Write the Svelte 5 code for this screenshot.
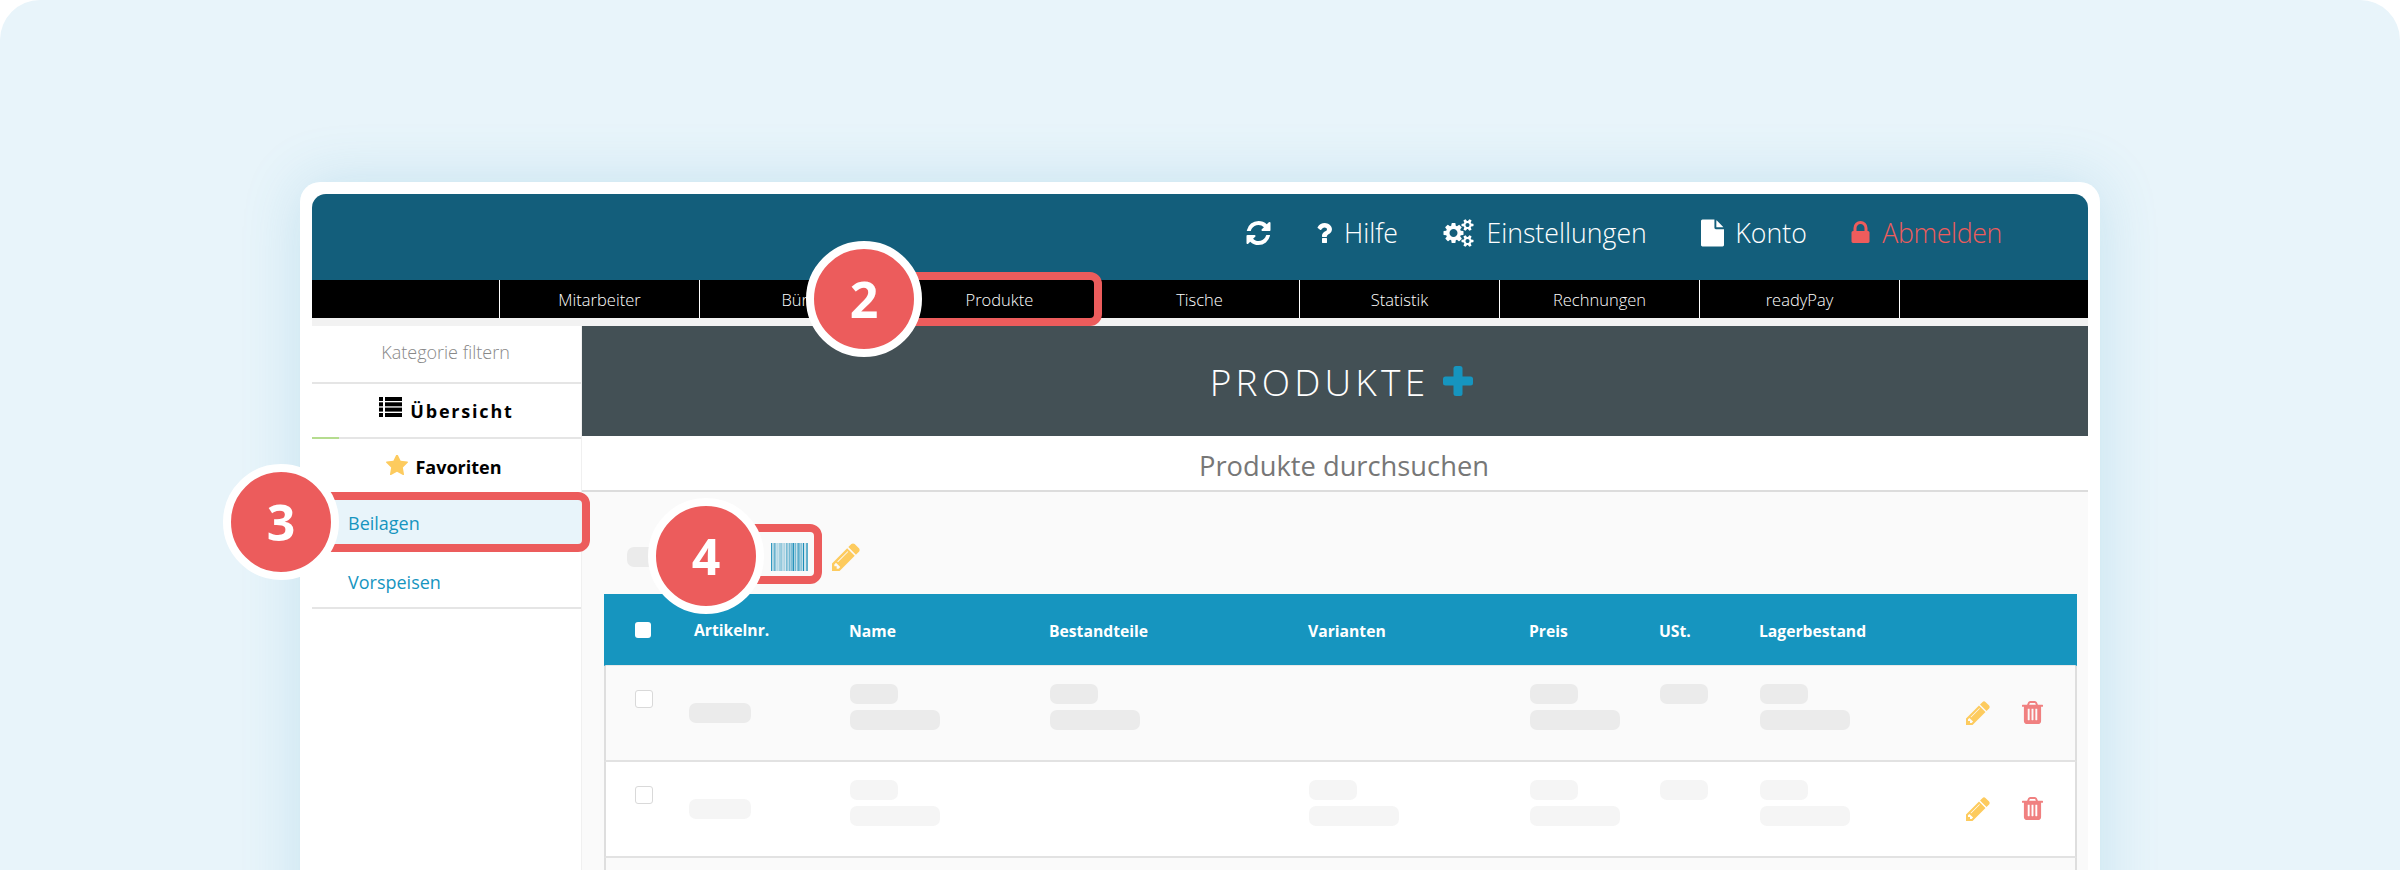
<script>
  const navItems = ['Mitarbeiter', 'Büro', 'Produkte', 'Tische', 'Statistik', 'Rechnungen', 'readyPay', ''];
  const columns = [
    { label: 'Artikelnr.', cls: 'h-art' },
    { label: 'Name', cls: 'h-std' },
    { label: 'Bestandteile', cls: 'h-std' },
    { label: 'Varianten', cls: 'h-std' },
    { label: 'Preis', cls: 'h-std' },
    { label: 'USt.', cls: 'h-std' },
    { label: 'Lagerbestand', cls: 'h-std' }
  ];
  const rows = [
    { alt: true, varianten: false, bestand: true },
    { alt: false, varianten: true, bestand: false },
    { alt: true, varianten: false, bestand: false }
  ];
  const bars = [
    [0, 2, 0.9], [3, 1, 0.6], [5, 2, 0.85], [8, 3, 0.3], [12, 1, 0.9], [14, 3, 0.45], [18, 1, 0.8], [20, 2, 0.35],
    [23, 1, 1], [25, 2, 0.55], [28, 1, 0.9], [30, 2, 0.7], [33, 3, 0.95], [37, 2, 0.6], [40, 1, 0.85], [42, 2, 0.95],
    [45, 3, 0.5], [49, 2, 1], [52, 1, 0.45], [54, 3, 0.7]
  ];
  const P = {
    pencil: 'M491 1536l91-91-235-235-91 91v107h128v128h107zm523-928q0-22-22-22-10 0-17 7l-542 542q-7 7-7 17 0 22 22 22 10 0 17-7l542-542q7-7 7-17zm-54-192l416 416-832 832h-416v-416zm683 96q0 53-37 90l-166 166-416-416 166-165q36-38 90-38 53 0 91 38l235 234q37 39 37 91z',
    trash: 'M704 1376v-704q0-14-9-23t-23-9h-64q-14 0-23 9t-9 23v704q0 14 9 23t23 9h64q14 0 23-9t9-23zm256 0v-704q0-14-9-23t-23-9h-64q-14 0-23 9t-9 23v704q0 14 9 23t23 9h64q14 0 23-9t9-23zm256 0v-704q0-14-9-23t-23-9h-64q-14 0-23 9t-9 23v704q0 14 9 23t23 9h64q14 0 23-9t9-23zm-544-992h448l-48-117q-7-9-17-11h-317q-10 2-17 11zm928 32v64q0 14-9 23t-23 9h-96v948q0 83-47 143.500t-113 60.500h-832q-66 0-113-58.500t-47-141.500v-952h-96q-14 0-23-9t-9-23v-64q0-14 9-23t23-9h309l70-167q15-37 54-63t79-26h320q40 0 79 26t54 63l70 167h309q14 0 23 9t9 23z',
    refresh: 'M1639 1056q0 5-1 7-64 268-268 434.500t-478 166.500q-146 0-282.500-55t-243.500-157l-129 129q-19 19-45 19t-45-19-19-45v-448q0-26 19-45t45-19h448q26 0 45 19t19 45-19 45l-137 137q71 66 161 102t187 36q134 0 250-65t186-179q11-17 53-117 8-23 30-23h192q13 0 22.500 9.500t9.500 22.500zm25-800v448q0 26-19 45t-45 19h-448q-26 0-45-19t-19-45 19-45l138-138q-148-137-349-137-134 0-250 65t-186 179q-11 17-53 117-8 23-30 23h-199q-13 0-22.500-9.500t-9.500-22.500v-7q65-268 270-434.500t480-166.500q146 0 284 55.500t245 156.500l130-129q19-19 45-19t45 19 19 45z',
    question: 'M1088 1256v240q0 16-12 28t-28 12h-240q-16 0-28-12t-12-28v-240q0-16 12-28t28-12h240q16 0 28 12t12 28zm316-600q0 54-15.500 101t-35 76.500-55 59.500-57.500 43.500-61 35.500q-41 23-68.500 65t-27.500 67q0 17-12 32.500t-28 15.500h-240q-15 0-25.500-18.500t-10.500-37.500v-45q0-83 65-156.500t143-108.500q59-27 84-56t25-76q0-42-46.500-74t-107.500-32q-65 0-108 29-35 25-107 115-13 16-31 16-12 0-25-8l-164-125q-13-10-15.500-25t5.500-28q160-266 464-266 80 0 161 31t146 83 106 127.500 41 158.500z',
    cogs: 'M896 896q0-106-75-181t-181-75-181 75-75 181 75 181 181 75 181-75 75-181zm768 512q0-52-38-90t-90-38-90 38-38 90q0 53 37.500 90.500t90.500 37.500 90.500-37.500 37.500-90.500zm0-1024q0-52-38-90t-90-38-90 38-38 90q0 53 37.500 90.500t90.500 37.500 90.500-37.500 37.500-90.500zm-384 421v185q0 10-7 19.500t-16 10.500l-155 24q-11 35-32 76 34 48 90 115 7 11 7 20 0 12-7 19-23 30-82.500 89.500t-78.500 59.500q-11 0-21-7l-115-90q-37 19-77 31-11 108-23 155-7 24-30 24h-186q-11 0-20-7.500t-10-17.500l-23-153q-34-10-75-31l-118 89q-7 7-20 7-11 0-21-8-144-133-144-160 0-9 7-19 10-14 41-53t47-61q-23-44-35-82l-152-24q-10-1-17-9.500t-7-19.500v-185q0-10 7-19.500t16-10.500l155-24q11-35 32-76-34-48-90-115-7-11-7-20 0-12 7-20 22-30 82-89t79-59q11 0 21 7l115 90q34-18 77-32 11-108 23-154 7-24 30-24h186q11 0 20 7.500t10 17.500l23 153q34 10 75 31l118-89q8-7 20-7 11 0 21 8 144 133 144 160 0 8-7 19-12 16-42 54t-45 60q23 48 34 82l152 23q10 2 17 10.500t7 19.500zm640 533v140q0 16-149 31-12 27-30 52 51 113 51 138 0 4-4 7-122 71-124 71-8 0-46-47t-52-68q-20 2-30 2t-30-2q-14 21-52 68t-46 47q-2 0-124-71-4-3-4-7 0-25 51-138-18-25-30-52-149-15-149-31v-140q0-16 149-31 13-29 30-52-51-113-51-138 0-4 4-7 4-2 35-20t59-34 30-16q8 0 46 46.500t52 67.500q20-2 30-2t30 2q51-71 92-112l6-2q4 0 124 70 4 3 4 7 0 25-51 138 17 23 30 52 149 15 149 31zm0-1024v140q0 16-149 31-12 27-30 52 51 113 51 138 0 4-4 7-122 71-124 71-8 0-46-47t-52-68q-20 2-30 2t-30-2q-14 21-52 68t-46 47q-2 0-124-71-4-3-4-7 0-25 51-138-18-25-30-52-149-15-149-31v-140q0-16 149-31 13-29 30-52-51-113-51-138 0-4 4-7 4-2 35-20t59-34 30-16q8 0 46 46.500t52 67.500q20-2 30-2t30 2q51-71 92-112l6-2q4 0 124 70 4 3 4 7 0 25-51 138 17 23 30 52 149 15 149 31z',
    file: 'M1152 512v-472q22 14 36 28l408 408q14 14 28 36h-472zm-128 32q0 40 28 68t68 28h544v1056q0 40-28 68t-68 28h-1344q-40 0-68-28t-28-68v-1600q0-40 28-68t68-28h800v544z',
    lock: 'M640 768h512v-192q0-106-75-181t-181-75-181 75-75 181v192zm832 96v576q0 40-28 68t-68 28h-960q-40 0-68-28t-28-68v-576q0-40 28-68t68-28h32v-192q0-184 132-316t316-132 316 132 132 316v192h32q40 0 68 28t28 68z',
    star: 'M1728 647q0 22-26 48l-363 354 86 500q1 7 1 20 0 21-10.500 35.500t-30.500 14.500q-19 0-40-12l-449-236-449 236q-22 12-40 12-21 0-31.500-14.500t-10.500-35.500q0-6 2-20l86-500-364-354q-25-27-25-48 0-37 56-46l502-73 225-455q19-41 49-41t49 41l225 455 502 73q56 9 56 46z'
  };
</script>

<div class="page">
  <div class="frame">
    <header class="top">
      <svg class="i-refresh" viewBox="128 128 1536 1536"><path d={P.refresh} /></svg>
      <span class="link l-help">
        <svg class="i-q" viewBox="384 256 1024 1280"><path d={P.question} /></svg>Hilfe
      </span>
      <span class="link l-set">
        <svg class="i-cogs" viewBox="0 0 1920 1792"><path d={P.cogs} /></svg>Einstellungen
      </span>
      <span class="link l-acc">
        <svg class="i-file" viewBox="128 0 1536 1792"><path d={P.file} /></svg>Konto
      </span>
      <span class="link l-out">
        <svg class="i-lock" viewBox="320 128 1152 1536"><path d={P.lock} /></svg>Abmelden
      </span>
    </header>

    <nav class="nav">
      <div class="cell first"></div>
      {#each navItems as item}
        <div class="cell">{item}</div>
      {/each}
    </nav>
    <div class="strip"></div>

    <div class="content">
      <aside class="side">
        <div class="s-filter">Kategorie filtern</div>
        <div class="s-over">
          <svg class="i-list" viewBox="0 0 23 20">
            <rect x="0" y="0" width="4" height="4" /><rect x="6" y="0" width="17" height="4" />
            <rect x="0" y="5.300" width="4" height="4" /><rect x="6" y="5.300" width="17" height="4" />
            <rect x="0" y="10.600" width="4" height="4" /><rect x="6" y="10.600" width="17" height="4" />
            <rect x="0" y="16" width="4" height="4" /><rect x="6" y="16" width="17" height="4" />
          </svg>
          <span>Übersicht</span>
        </div>
        <div class="s-fav">
          <svg class="i-star" viewBox="0 128 1664 1536"><path transform="translate(-64 0)" d={P.star} /></svg>
          <span>Favoriten</span>
        </div>
        <div class="s-item active">Beilagen</div>
        <div class="s-item last">Vorspeisen</div>
      </aside>

      <main class="main">
        <div class="band">
          <h1>PRODUKTE</h1>
          <svg class="i-plus" viewBox="0 0 30 30">
            <rect x="10.500" y="0" width="9" height="30" rx="2.500" />
            <rect x="0" y="10.500" width="30" height="9" rx="2.500" />
          </svg>
        </div>
        <div class="search">Produkte durchsuchen</div>
        <div class="panel">
          <div class="tools">
            <span class="pill tool-pill"></span>
            <svg class="barcode" viewBox="0 0 57 28" preserveAspectRatio="none">
              {#each bars as b}
                <rect x={b[0]} y="0" width={b[1]} height="28" fill="#1b8db8" opacity={b[2]} />
              {/each}
            </svg>
            <svg class="i-edit-big" viewBox="128 128 1536 1536"><path d={P.pencil} /></svg>
          </div>

          <div class="head">
            <span class="box head-box"></span>
            {#each columns as c}
              <span class={c.cls}>{c.label}</span>
            {/each}
          </div>

          {#each rows as r}
            <div class="row" class:alt={r.alt}>
              <span class="box row-box"></span>
              <div class="c c-art"><span class="pill w62"></span></div>
              <div class="c"><span class="pill w48"></span><span class="pill w90"></span></div>
              <div class="c">
                {#if r.bestand}<span class="pill w48"></span><span class="pill w90"></span>{/if}
              </div>
              <div class="c">
                {#if r.varianten}<span class="pill w48"></span><span class="pill w90"></span>{/if}
              </div>
              <div class="c"><span class="pill w48"></span><span class="pill w90"></span></div>
              <div class="c"><span class="pill w48"></span></div>
              <div class="c"><span class="pill w48"></span><span class="pill w90"></span></div>
              <svg class="i-edit" viewBox="128 128 1536 1536"><path d={P.pencil} /></svg>
              <svg class="i-trash" viewBox="192 128 1408 1536"><path d={P.trash} /></svg>
            </div>
          {/each}
        </div>
      </main>
    </div>

    <div class="mark m2"></div>
    <div class="mark m3"></div>
    <div class="mark m4"></div>
    <div class="badge b2">2</div>
    <div class="badge b3">3</div>
    <div class="badge b4">4</div>
  </div>
</div>

<style>
  :global(body) {
    margin: 0;
    background: #fff;
  }
  .page {
    box-sizing: border-box;
    width: 2400px;
    height: 870px;
    padding-top: 182px;
    overflow: hidden;
    background: #e8f4fa;
    border-radius: 40px 40px 0 0;
    font-family: "Open Sans", sans-serif;
  }
  .frame {
    position: relative;
    box-sizing: border-box;
    width: 1800px;
    height: 800px;
    margin: 0 auto;
    padding: 12px;
    background: #fff;
    border-radius: 20px;
    box-shadow: 0 0 60px rgba(60, 160, 200, 0.2);
  }
  svg {
    display: block;
    flex: none;
    fill: currentColor;
  }

  .top {
    display: flex;
    align-items: center;
    justify-content: flex-end;
    height: 86px;
    padding: 0 86px 10px 0;
    box-sizing: border-box;
    background: #135e7b;
    border-radius: 14px 14px 0 0;
    color: #fff;
    font-size: 26.700px;
    font-weight: 300;
  }
  .link {
    display: flex;
    align-items: center;
  }
  .i-refresh { width: 25px; height: 24px; margin-top: 2px; }
  .i-q { width: 16px; height: 20px; margin: 2px 12px 0 0; }
  .i-cogs { width: 31px; height: 28px; margin: 2px 12px 0 0; }
  .i-file { width: 23px; height: 28px; margin: 2px 11px 0 0; }
  .i-lock { width: 19px; height: 24px; margin: 2px 12px 0 0; }
  .l-help { margin-left: 45px; }
  .l-set { margin-left: 45.500px; }
  .l-acc { margin-left: 54.500px; }
  .l-out { margin-left: 44.500px; color: #ee5c5c; letter-spacing: -0.35px; }

  .nav {
    display: flex;
    height: 38px;
    background: #000;
    color: #fff;
    font-size: 16.500px;
    font-weight: 300;
  }
  .cell {
    box-sizing: border-box;
    display: flex;
    align-items: center;
    justify-content: center;
    width: 200px;
    border-right: 1px solid #fff;
  }
  .cell.first {
    width: 188px;
  }
  .cell:last-child {
    flex: 1;
    border-right: 0;
  }
  .strip {
    height: 8px;
    background: #f2f2f2;
  }

  .content {
    display: flex;
    height: 700px;
  }
  .side {
    box-sizing: border-box;
    width: 270px;
    border-right: 1px solid #f0f0f0;
    text-align: center;
    color: #000;
  }
  .s-filter {
    box-sizing: border-box;
    height: 58px;
    padding: 0 2px 5px 0;
    border-bottom: 2px solid #e5e5e5;
    display: flex;
    align-items: center;
    justify-content: center;
    font-size: 18px;
    font-weight: 300;
    color: #888;
  }
  .s-over {
    position: relative;
    box-sizing: border-box;
    height: 55px;
    padding: 1px 0 0 0;
    border-bottom: 2px solid #e5e5e5;
    display: flex;
    align-items: center;
    justify-content: center;
    gap: 8px;
    font-size: 18px;
    font-weight: 700;
    letter-spacing: 1.800px;
  }
  .s-over::after {
    content: "";
    position: absolute;
    left: 0;
    bottom: -2px;
    width: 27px;
    height: 2px;
    background: #b5dc8f;
  }
  .i-list { width: 23px; height: 20px; margin-top: -9px; }
  .s-fav {
    box-sizing: border-box;
    height: 61px;
    padding: 0 5px 6px 0;
    display: flex;
    align-items: center;
    justify-content: center;
    gap: 7px;
    font-size: 18px;
    font-weight: 700;
  }
  .i-star { width: 22px; height: 21px; color: #fdcb5e; margin-top: -3px; }
  .s-item {
    box-sizing: border-box;
    display: flex;
    align-items: center;
    padding-left: 36px;
    color: #1695bf;
    font-size: 18px;
  }
  .s-item.active {
    height: 44px;
    padding-top: 2px;
    background: #e8f4fa;
  }
  .s-item.last {
    height: 65px;
    padding-top: 12px;
    border-bottom: 2px solid #e5e5e5;
  }

  .main {
    flex: 1;
    min-width: 0;
  }
  .band {
    display: flex;
    align-items: center;
    justify-content: center;
    gap: 14px;
    height: 110px;
    padding-left: 13px;
    box-sizing: border-box;
    background: #435055;
    color: #1695bf;
  }
  .band h1 {
    margin: 0;
    color: #fff;
    font-size: 37px;
    font-weight: 300;
    letter-spacing: 4.200px;
  }
  .i-plus { width: 30px; height: 30px; margin-top: -1px; }
  .search {
    box-sizing: border-box;
    display: flex;
    align-items: center;
    justify-content: center;
    height: 56px;
    padding: 5px 0 0 18px;
    border-bottom: 2px solid #dcdcdc;
    color: #777;
    font-size: 27.300px;
  }
  .panel {
    background: #fafafa;
    height: 534px;
    padding: 0 11px 0 22px;
  }
  .tools {
    display: flex;
    align-items: center;
    height: 102px;
    padding: 28px 0 0 23px;
    box-sizing: border-box;
  }
  .pill {
    display: block;
    height: 20px;
    border-radius: 7px;
    background: #ebebeb;
  }
  .tool-pill { width: 40px; }
  .barcode {
    width: 37px;
    height: 28px;
    margin-left: 104px;
  }
  .i-edit-big {
    width: 28px;
    height: 28px;
    margin-left: 24px;
    color: #fdcb5e;
  }

  .head,
  .row {
    box-sizing: border-box;
    display: grid;
    grid-template-columns: 83px 161px 200px 259px 221px 130px 100px 206px 56px 1fr;
  }
  .head {
    height: 72px;
    padding-top: 26px;
    border: solid #1695bf;
    border-width: 0 2px;
    border-bottom: 1px solid #e8e8e8;
    background: #1695bf;
    color: #fff;
    font-size: 15.700px;
    font-weight: 700;
    line-height: 22px;
  }
  .h-art {
    margin-left: 5px;
    margin-top: -1px;
  }
  .h-std {
    margin-left: -1px;
  }
  .box {
    box-sizing: border-box;
    display: block;
    margin-left: 29px;
    border-radius: 3px;
  }
  .head-box {
    width: 16px;
    height: 16px;
    margin-top: 2px;
    background: #fff;
  }
  .row {
    height: 96px;
    padding-top: 18px;
    border: solid #dedede;
    border-width: 0 2px 2px;
    border-bottom-color: #e2e2e2;
    background: #fff;
  }
  .row .pill {
    background: #f5f5f5;
  }
  .row.alt {
    background: #fafafa;
  }
  .row.alt .pill {
    background: #ebebeb;
  }
  .row-box {
    width: 18px;
    height: 18px;
    margin-top: 6px;
    border: 1px solid #d9d9d9;
    background: #fff;
  }
  .c {
    display: flex;
    flex-direction: column;
    gap: 6px;
  }
  .c-art {
    padding-top: 19px;
  }
  .w48 { width: 48px; }
  .w62 { width: 62px; }
  .w90 { width: 90px; }
  .i-edit {
    width: 24px;
    height: 24px;
    margin-top: 17px;
    color: #fdcb5e;
  }
  .i-trash {
    width: 21px;
    height: 23px;
    margin-top: 17px;
    color: #f08080;
  }

  .mark {
    position: absolute;
    box-sizing: border-box;
    border: 8px solid #ec5c5c;
    border-radius: 12px;
  }
  .m2 { left: 575px; top: 90px; width: 227px; height: 54px; }
  .m3 { left: 0; top: 310px; width: 290px; height: 60px; }
  .m4 { left: 440px; top: 342px; width: 82px; height: 60px; }
  .badge {
    position: absolute;
    box-sizing: border-box;
    width: 116px;
    height: 116px;
    display: flex;
    align-items: center;
    justify-content: center;
    border: 8px solid #fff;
    border-radius: 50%;
    background: #ec5c5c;
    color: #fff;
    font-size: 50px;
    font-weight: 700;
  }
  .b2 { left: 506px; top: 59px; }
  .b3 { left: -77px; top: 282px; }
  .b4 { left: 348px; top: 316px; }
</style>
